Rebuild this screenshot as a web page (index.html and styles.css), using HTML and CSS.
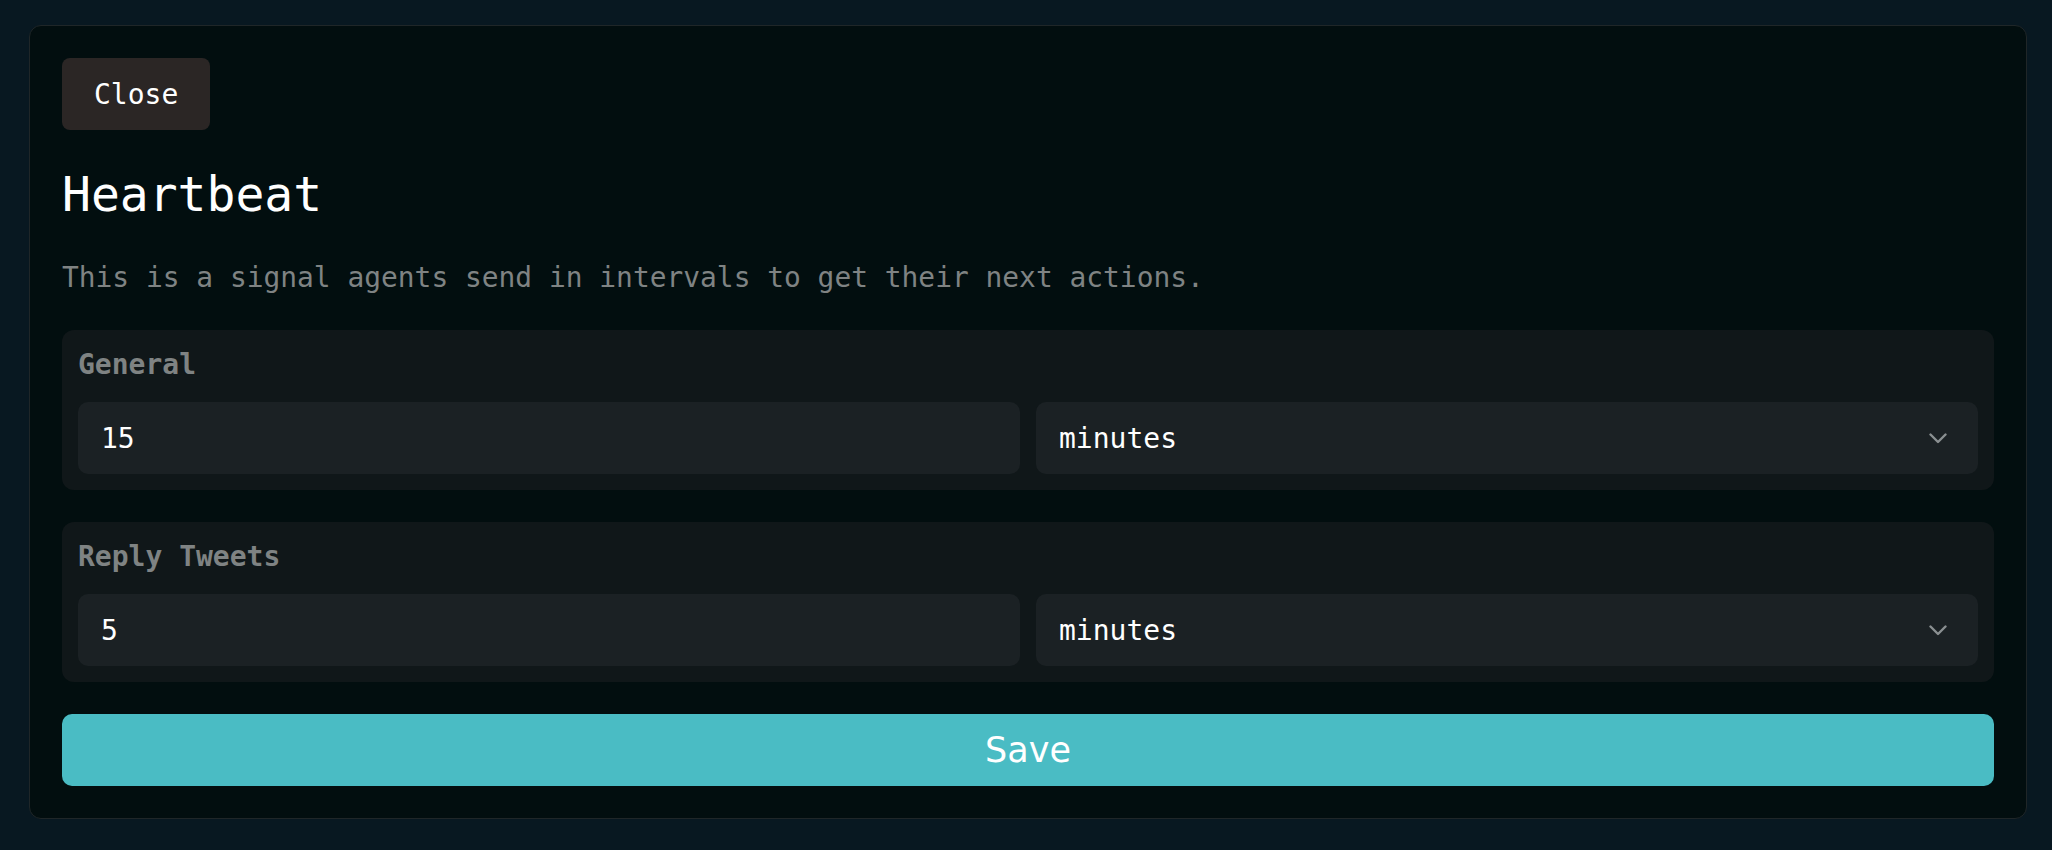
FILE: index.html
```html
<!DOCTYPE html>
<html lang="en">
<head>
  <meta charset="UTF-8" />
  <meta name="viewport" content="width=device-width, initial-scale=1.0" />
  <title>Heartbeat</title>
  <link rel="stylesheet" href="styles.css">
</head>
<body>
  <!-- Heartbeat settings dialog -->
  <div class="panel">
    <button class="btn close">Close</button>
    <h1 class="title">Heartbeat</h1>
    <p class="desc">This is a signal agents send in intervals to get their next actions.</p>

    <div class="group">
      <div class="label">General</div>
      <div class="row">
        <input class="field" type="text" value="15" />
        <div class="select-wrap">
          <select class="field select">
            <option>minutes</option>
            <option>hours</option>
          </select>
          <svg class="chevron" width="18" height="11" viewBox="0 0 18 11">
            <path d="M1.5 1.5 L9 9 L16.5 1.5" fill="none" stroke="#8a8f91" stroke-width="2.4" stroke-linecap="round" stroke-linejoin="round"/>
          </svg>
        </div>
      </div>
    </div>

    <div class="group">
      <div class="label">Reply Tweets</div>
      <div class="row">
        <input class="field" type="text" value="5" />
        <div class="select-wrap">
          <select class="field select">
            <option>minutes</option>
            <option>hours</option>
          </select>
          <svg class="chevron" width="18" height="11" viewBox="0 0 18 11">
            <path d="M1.5 1.5 L9 9 L16.5 1.5" fill="none" stroke="#8a8f91" stroke-width="2.4" stroke-linecap="round" stroke-linejoin="round"/>
          </svg>
        </div>
      </div>
    </div>

    <button class="btn save">Save</button>
  </div>
</body>
</html>
```

FILE: styles.css
```css
body {
  margin: 0;
  background: #081821;
  font-family: 'DejaVu Sans Mono', 'Liberation Mono', monospace;
  color: #ffffff;
}

.panel {
  margin: 25px 25px 0 29px;
  padding: 32px;
  background: #020e0f;
  border: 1px solid #1f2628;
  border-radius: 12px;
  display: flex;
  flex-direction: column;
  align-items: flex-start;
}

.btn {
  border: none;
  cursor: pointer;
  height: 72px;
  border-radius: 8px;
}

.close {
  font-family: 'DejaVu Sans Mono', monospace;
  font-size: 28px;
  padding: 0 32px;
  background: #2b2625;
  color: #ffffff;
}

.title {
  font-size: 48px;
  font-weight: normal;
  line-height: 56px;
  margin: 36px 0 39px;
}

.desc {
  font-size: 27.9px;
  line-height: 34px;
  color: #7f8383;
  margin: 0 0 35px;
}

.group {
  align-self: stretch;
  background: #101719;
  border-radius: 12px;
  padding: 16px;
  margin-bottom: 32px;
}

.label {
  font-size: 28px;
  font-weight: bold;
  line-height: 38px;
  color: #7f8383;
  margin-bottom: 18px;
}

.row {
  display: grid;
  grid-template-columns: 1fr 1fr;
  gap: 16px;
}

.field {
  height: 72px;
  box-sizing: border-box;
  width: 100%;
  border: none;
  border-radius: 10px;
  background: #1b2124;
  color: #ffffff;
  font-family: 'DejaVu Sans Mono', monospace;
  font-size: 28px;
  padding: 0 23px;
  outline: none;
}

.select-wrap {
  position: relative;
}

.select {
  appearance: none;
  -webkit-appearance: none;
  padding: 0 23px;
}

.chevron {
  position: absolute;
  right: 31px;
  top: 31px;
  pointer-events: none;
}

.save {
  align-self: stretch;
  background: #4abcc4;
  color: #ffffff;
  font-family: 'DejaVu Sans', sans-serif;
  font-size: 35px;
  border-radius: 10px;
}
```
